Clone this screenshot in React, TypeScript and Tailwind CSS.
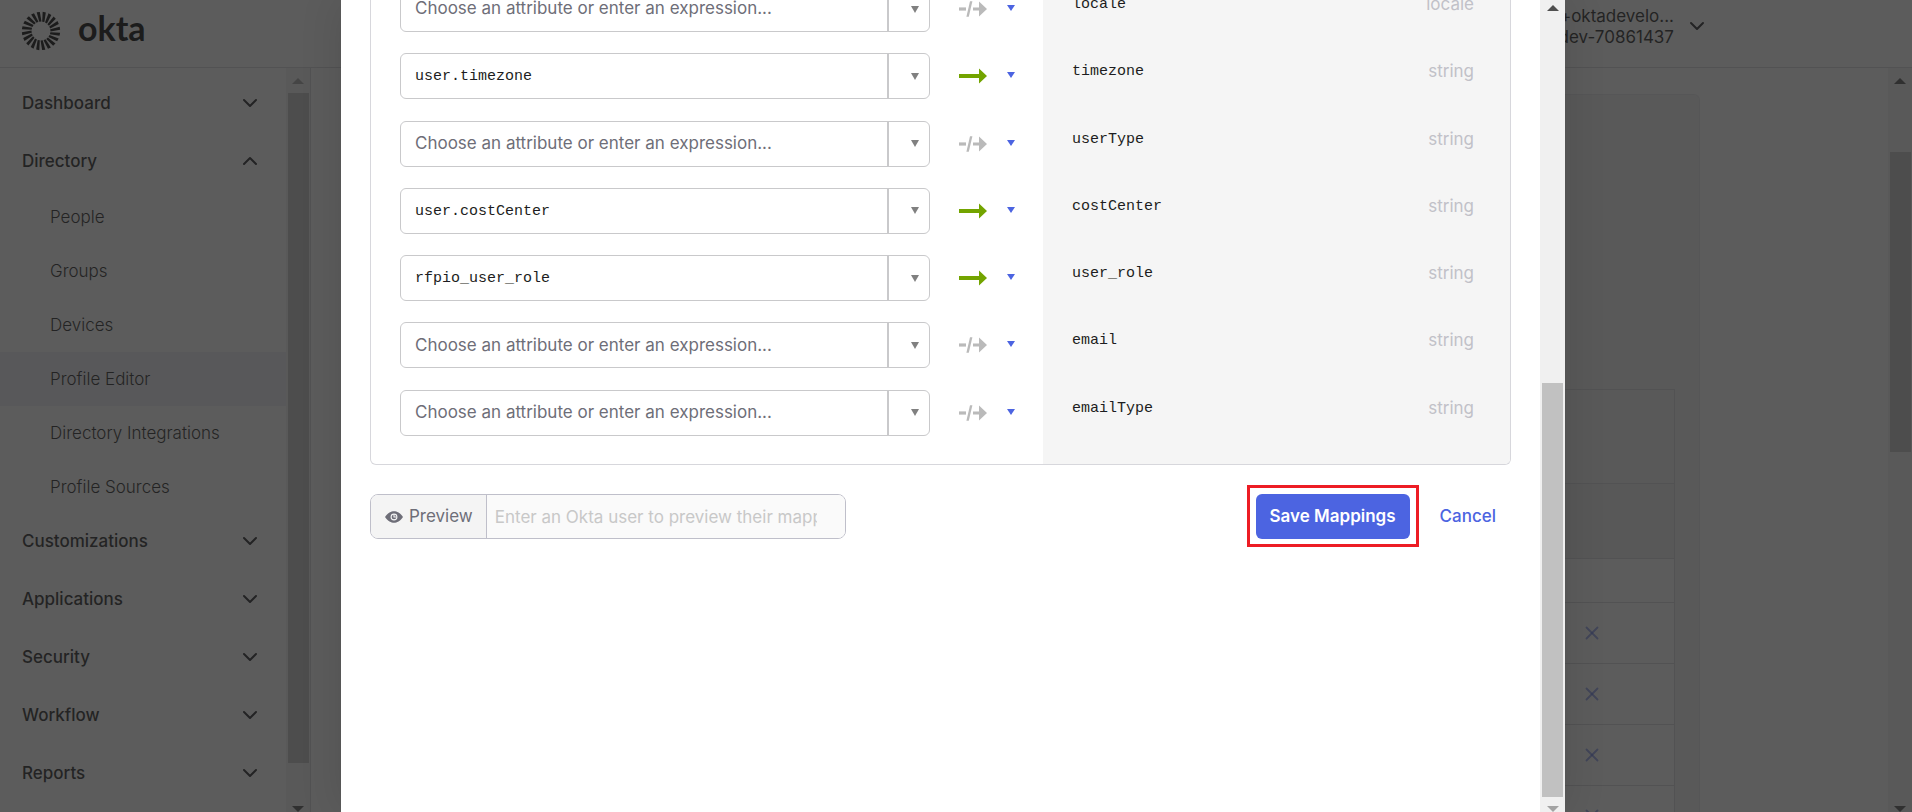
import React from "react";
import { ChevronDown, ChevronUp, X } from "lucide-react";

const PLACEHOLDER = "Choose an attribute or enter an expression...";

type Mapping = { value?: string; name: string; type: string };

const mappings: Mapping[] = [
  { name: "locale", type: "locale" },
  { value: "user.timezone", name: "timezone", type: "string" },
  { name: "userType", type: "string" },
  { value: "user.costCenter", name: "costCenter", type: "string" },
  { value: "rfpio_user_role", name: "user_role", type: "string" },
  { name: "email", type: "string" },
  { name: "emailType", type: "string" },
];

const directoryItems = [
  "People",
  "Groups",
  "Devices",
  "Profile Editor",
  "Directory Integrations",
  "Profile Sources",
];

const lowerSections = ["Customizations", "Applications", "Security", "Workflow", "Reports"];

function SunLogo() {
  return (
    <svg width="40" height="40" viewBox="-20 -20 40 40" aria-hidden="true">
      {Array.from({ length: 20 }, (_, i) => (
        <path
          key={i}
          d="M-0.6 -9.4 H1.6 L1.2 -19.1 H-2 Z"
          fill="#000"
          transform={`rotate(${i * 18 + 11})`}
        />
      ))}
    </svg>
  );
}

function Triangle({ className, up = false }: { className: string; up?: boolean }) {
  return (
    <svg viewBox="0 0 12 6" className={className} preserveAspectRatio="none" aria-hidden="true">
      <path d={up ? "M6 0 L12 6 H0 Z" : "M0 0 H12 L6 6 Z"} fill="currentColor" />
    </svg>
  );
}

function MappedArrow() {
  return (
    <svg width="28" height="16" viewBox="0 0 28 16" aria-hidden="true">
      <path d="M0 6.1 H20 V0.5 L28 8 L20 15.5 V9.9 H0 Z" fill="#73a400" />
    </svg>
  );
}

function UnmappedArrow() {
  return (
    <svg width="28" height="16" viewBox="0 0 28 16" fill="#bababa" aria-hidden="true">
      <path d="M0 6.4 H7 V9.6 H0 Z" />
      <path d="M11 0.3 H13.4 L9.8 15.7 H7.4 Z" />
      <path d="M14 6.4 H20 V0.5 L28 8 L20 15.5 V9.6 H14 Z" />
    </svg>
  );
}

function EyeIcon() {
  return (
    <svg width="18" height="12" viewBox="0 0 18 12" aria-hidden="true">
      <path d="M0 6 C3 1.6 6 0.2 9 0.2 C12 0.2 15 1.6 18 6 C15 10.4 12 11.8 9 11.8 C6 11.8 3 10.4 0 6 Z" fill="#6e6e78" />
      <circle cx="9" cy="6" r="2.9" fill="none" stroke="#f4f4f4" strokeWidth="1.1" />
      <path d="M9 3.6 V6 H11.4" fill="none" stroke="#f4f4f4" strokeWidth="1.1" />
    </svg>
  );
}

function NavSection({ label, open = false }: { label: string; open?: boolean }) {
  return (
    <button
      type="button"
      aria-expanded={open}
      className="flex h-[58px] w-full shrink-0 items-center justify-between pr-6 pl-[22px] font-medium"
    >
      <span className="pt-[2px]">{label}</span>
      {open ? <ChevronUp size={24} /> : <ChevronDown size={24} />}
    </button>
  );
}

function MappingRow({ mapping, last }: { mapping: Mapping; last: boolean }) {
  const { value, name, type } = mapping;
  return (
    <tr className={last ? "h-[74px] align-top" : "h-[67px] align-top"}>
      <td className="pl-[29px]">
        <div className="flex h-[46px] rounded-md border border-[#c9c9cb] bg-white">
          <input
            type="text"
            aria-label={`Expression for ${name}`}
            placeholder={PLACEHOLDER}
            defaultValue={value}
            className={
              value
                ? "min-w-0 flex-1 px-[14px] pt-[2px] font-['Liberation_Mono',monospace] text-[15px] text-[#1d1d21] outline-none"
                : "min-w-0 flex-1 px-[14px] outline-none placeholder:text-[#6e6e78]"
            }
          />
          <button
            type="button"
            aria-label={`Choose attribute for ${name}`}
            className="flex w-[42px] items-center justify-center border-l-2 border-[#c9c9cb] pl-[11px]"
          >
            <Triangle className="h-[7px] w-2 text-[#808080]" />
          </button>
        </div>
      </td>
      <td className="pl-[29px]">
        <button
          type="button"
          aria-label={`Mapping options for ${name}`}
          className="flex h-[46px] items-center gap-5"
        >
          {value ? <MappedArrow /> : <UnmappedArrow />}
          <Triangle className="mb-[2px] h-[6px] w-2 text-[#4c64e1]" />
        </button>
      </td>
      <td className="bg-[#f5f5f5] pl-[29px] font-['Liberation_Mono',monospace] text-[15px] leading-[38px] text-[#1d1d21]">
        {name}
      </td>
      <td className="bg-[#f5f5f5] pr-9 text-right leading-9 text-[#c1c1c8]">{type}</td>
    </tr>
  );
}

function Background() {
  return (
    <div className="flex h-full flex-col bg-white text-[#1d1d21]">
      <header className="flex h-[68px] shrink-0 items-start justify-between border-b border-[#d7d7dc]">
        <a href="#home" aria-label="okta" className="flex items-start pt-[5px] pl-[21px]">
          <span className="pt-[6px]">
            <SunLogo />
          </span>
          <span className="pl-[17px] font-['Lato',sans-serif] text-[34px] leading-[46px] font-bold text-black">okta</span>
        </a>
        <button type="button" className="flex items-start gap-[11px] pt-[6px] pr-[203px] text-right leading-[21px]">
          <span>
            +oktadevelo...
            <br />
            dev-70861437
          </span>
          <span className="pt-2">
            <ChevronDown size={24} />
          </span>
        </button>
      </header>
      <div className="flex min-h-0 flex-1">
        <aside className="flex w-[311px] shrink-0 border-r border-[#d7d7dc]">
          <nav className="flex min-w-0 flex-1 flex-col overflow-hidden pt-[6px]">
            <NavSection label="Dashboard" />
            <NavSection label="Directory" open />
            <ul className="-mb-[2px]">
              {directoryItems.map((item) => (
                <li key={item}>
                  <a
                    href="#directory"
                    className={
                      item === "Profile Editor"
                        ? "flex h-[54px] items-center bg-[#f0f0f6] pt-[2px] pl-[50px] font-light"
                        : "flex h-[54px] items-center pt-[2px] pl-[50px] font-light"
                    }
                  >
                    {item}
                  </a>
                </li>
              ))}
            </ul>
            {lowerSections.map((label) => (
              <NavSection key={label} label={label} />
            ))}
          </nav>
          <div className="flex w-6 shrink-0 flex-col items-center overflow-hidden bg-[#f1f1f1] pt-[10px]">
            <Triangle up className="h-[6px] w-3 shrink-0 text-[#a3a3a3]" />
            <div className="mt-[9px] mb-[43px] w-[21px] flex-1 bg-[#c1c1c1]" />
            <Triangle className="h-[6px] w-3 shrink-0 text-[#505050]" />
          </div>
        </aside>
        <main className="min-w-0 flex-1 overflow-hidden pt-[26px] pr-[188px] pl-[30px]">
          <div className="h-full rounded-t-md border border-b-0 border-[#e8e8ec] bg-[#f4f4f4] pr-6">
            <div className="h-[294px]" />
            <div className="border-x border-t border-[#d7d7dc]">
              <div className="h-[93px]" />
              <div className="h-[75px] border-t border-[#d7d7dc] bg-[#efefef]" />
              <div className="h-11 border-t border-[#d7d7dc] bg-white" />
              {[0, 1, 2, 3].map((row) => (
                <div key={row} className="flex h-[61px] items-center justify-end border-t border-[#d7d7dc] bg-white pr-[71px]">
                  <button type="button" aria-label="Remove attribute">
                    <X size={22} strokeWidth={2} className="text-[#4c64e1]/60" />
                  </button>
                </div>
              ))}
            </div>
          </div>
        </main>
        <div className="flex w-6 shrink-0 flex-col items-center bg-[#f1f1f1] pt-[10px]">
          <Triangle up className="h-[6px] w-3 shrink-0 text-[#505050]" />
          <div className="mt-[68px] h-[300px] w-[21px] bg-[#c1c1c1]" />
          <Triangle className="mt-auto h-[6px] w-3 shrink-0 text-[#505050]" />
        </div>
      </div>
    </div>
  );
}

function MappingsDialog() {
  return (
    <section
      role="dialog"
      aria-label="User profile mappings"
      className="flex h-full w-[1224px] bg-white shadow-[0_0_40px_rgba(0,0,0,0.12)]"
    >
      <div className="min-w-0 flex-1 overflow-hidden px-[29px]">
        <div className="-mt-[14px] overflow-hidden rounded-b-md border border-t-0 border-[#d7d7dc]">
          <table className="h-[478px] w-full table-fixed">
            <colgroup>
              <col />
              <col className="w-[113px]" />
              <col className="w-[300px]" />
              <col className="w-[167px]" />
            </colgroup>
            <tbody>
              {mappings.map((mapping, i) => (
                <MappingRow key={mapping.name} mapping={mapping} last={i === mappings.length - 1} />
              ))}
            </tbody>
          </table>
        </div>
        <div className="mt-[29px] flex h-[45px] items-stretch justify-between pr-[15px]">
          <div className="flex w-[476px] overflow-hidden rounded-lg border border-[#bfbfca]">
            <button
              type="button"
              className="flex items-center gap-[6px] border-r border-[#bfbfca] bg-[#f4f4f4] pr-[13px] pl-[14px] text-[#6e6e78]"
            >
              <EyeIcon />
              Preview
            </button>
            <input
              type="text"
              aria-label="Okta user"
              placeholder="Enter an Okta user to preview their mappings"
              className="min-w-0 flex-1 bg-[#fafafa] pt-[2px] pr-7 pl-2 outline-none placeholder:text-[#c8c8c8]"
            />
          </div>
          <div className="flex gap-[30px]">
            <div className="relative flex">
              <button type="button" className="rounded-md bg-[#4c64e1] px-[14px] font-semibold text-white">
                Save Mappings
              </button>
              <div className="pointer-events-none absolute -inset-x-[9px] -top-[9px] -bottom-2 border-3 border-[#ed1c24]" />
            </div>
            <button type="button" className="font-medium text-[#4c64e1]">
              Cancel
            </button>
          </div>
        </div>
      </div>
      <div className="flex w-[25px] shrink-0 flex-col items-center bg-[#f0f0f0] pt-[5px]">
        <Triangle up className="h-[6px] w-3 shrink-0 text-[#505050]" />
        <div className="mt-[372px] mb-[9px] w-[21px] flex-1 bg-[#c1c1c1]" />
        <Triangle className="h-[6px] w-3 shrink-0 text-[#a3a3a3]" />
      </div>
    </section>
  );
}

export default function App() {
  return (
    <div className="relative h-screen overflow-hidden font-['Inter',sans-serif] text-[17px]">
      <Background />
      <div className="absolute inset-0 flex justify-center bg-[#262626]/75 pr-[6px]">
        <MappingsDialog />
      </div>
    </div>
  );
}
